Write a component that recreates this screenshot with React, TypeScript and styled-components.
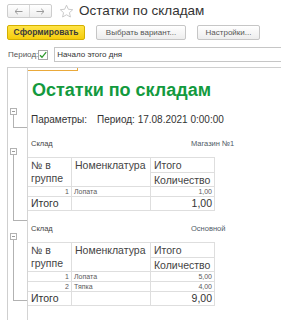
import React from 'react';
import styled, { createGlobalStyle } from 'styled-components';

const GlobalStyle = createGlobalStyle`
  html, body {
    margin: 0;
    padding: 0;
    background: #fff;
  }
  body {
    font-family: "Liberation Sans", Arial, sans-serif;
    color: #333;
    overflow: hidden;
  }
`;

const Page = styled.div`
  width: 281px;
  height: 320px;
  overflow: hidden;
  background: #fff;
`;

/* --- window header --- */

const TitleBar = styled.div`
  display: flex;
  align-items: center;
  height: 14px;
  padding: 4px 0 0 7px;
`;

const NavGroup = styled.div`
  display: flex;
  height: 14px;
  box-sizing: border-box;
  border: 1px solid #cdcdcd;
  border-radius: 2px;
  background: linear-gradient(#ffffff, #eeeeee);
`;

const NavButton = styled.div<{ $divider?: boolean }>`
  width: 21px;
  display: flex;
  align-items: center;
  justify-content: center;
  border-left: ${(p) => (p.$divider ? '1px solid #d8d8d8' : 'none')};
`;

const Star = styled.svg`
  margin-left: 7px;
  flex: none;
`;

const WindowTitle = styled.div`
  margin-left: 5px;
  font-size: 13.5px;
  line-height: 16px;
  color: #333;
  white-space: nowrap;
`;

const CommandBar = styled.div`
  display: flex;
  gap: 11px;
  padding-left: 7px;
  margin-top: 7px;
`;

const Button = styled.button<{ $primary?: boolean; $width: number }>`
  width: ${(p) => p.$width}px;
  height: 15px;
  margin: 0;
  padding: 0;
  box-sizing: border-box;
  border-radius: 2px;
  border: 1px solid ${(p) => (p.$primary ? '#d4b000' : '#c6c6c6')};
  background: ${(p) =>
    p.$primary ? 'linear-gradient(#ffe447, #f6cd0c)' : 'linear-gradient(#ffffff, #ededed)'};
  font-family: inherit;
  font-size: ${(p) => (p.$primary ? '8.5px' : '8px')};
  font-weight: ${(p) => (p.$primary ? 'bold' : 'normal')};
  color: ${(p) => (p.$primary ? '#3a3a3a' : '#555')};
  line-height: 13px;
  white-space: nowrap;
`;

const ParamRow = styled.div`
  display: flex;
  align-items: center;
  margin-top: 7px;
  padding-left: 8px;
  height: 15px;
`;

const ParamLabel = styled.span`
  font-size: 8px;
  color: #555;
  width: 33px;
`;

const CheckBox = styled.div`
  width: 10px;
  height: 10px;
  box-sizing: border-box;
  border: 1px solid #a8a8a8;
  background: #fff;
  display: flex;
  align-items: center;
  justify-content: center;
  flex: none;
`;

const Input = styled.div`
  margin-left: 6px;
  flex: none;
  width: 240px;
  height: 15px;
  box-sizing: border-box;
  border: 1px solid #c6c6c6;
  padding-left: 2px;
  font-size: 8px;
  line-height: 13px;
  color: #333;
`;

/* --- spreadsheet --- */

const Report = styled.div`
  margin: 5px 0 0 7px;
  border-top: 1px solid #cfcfcf;
  border-left: 1px solid #cfcfcf;
`;

const Band = styled.div`
  display: flex;
`;

const Gutter = styled.div`
  width: 19px;
  flex: none;
`;

const Bracket = styled.div<{ $top: number; $bottom: number }>`
  width: 19px;
  flex: none;
  box-sizing: border-box;
  padding: ${(p) => p.$top}px 0 ${(p) => p.$bottom}px 2px;
  display: flex;
  flex-direction: column;
  align-items: flex-start;
`;

const Toggle = styled.div`
  width: 7px;
  height: 7px;
  box-sizing: border-box;
  border: 1px solid #b2b2b2;
  display: flex;
  align-items: center;
  justify-content: center;
  &::after {
    content: '';
    width: 3px;
    height: 1px;
    background: #9a9a9a;
  }
`;

const Stem = styled.div`
  flex: 1;
  margin-left: 3px;
  width: 14px;
  box-sizing: border-box;
  border-left: 1px solid #b2b2b2;
  border-bottom: 1px solid #b2b2b2;
`;

const Sheet = styled.div<{ $pt?: number; $pb?: number }>`
  flex: 1;
  border-left: 1px solid #d4d4d4;
  padding: ${(p) => p.$pt ?? 0}px 0 ${(p) => p.$pb ?? 0}px;
  min-width: 0;
`;

const SelectedCell = styled.div`
  width: 50px;
  height: 3px;
  box-sizing: border-box;
  border-right: 1px solid #eaa93a;
  border-bottom: 1px solid #eaa93a;
`;

const ReportTitle = styled.div`
  padding-left: 4px;
  font-size: 18px;
  line-height: 22px;
  font-weight: bold;
  color: #139a3e;
  white-space: nowrap;
`;

const ParamsLine = styled.div`
  display: flex;
  font-size: 10px;
  line-height: 12px;
  color: #333;
  white-space: nowrap;
`;

const ParamsName = styled.span`
  width: 66px;
  padding-left: 3px;
  flex: none;
`;

const WarehouseRow = styled.div`
  display: grid;
  grid-template-columns: 163px 1fr;
  height: 14px;
  align-items: center;
  margin-bottom: 7px;
  white-space: nowrap;
`;

const SmallCaption = styled.span`
  padding-left: 3px;
  font-size: 7.5px;
  color: #444;
`;

const WarehouseName = styled.span`
  font-size: 7.5px;
  color: #4f5a66;
`;

const Table = styled.div`
  display: grid;
  grid-template-columns: 44px 79px 64px;
  width: 187px;
  border-top: 1px solid #dedede;
`;

type Kind = 'head' | 'row' | 'total';

const Cell = styled.div<{ $kind: Kind; $right?: boolean; $span?: number; $h?: number }>`
  box-sizing: border-box;
  border-right: 1px solid #dedede;
  border-bottom: 1px solid #dedede;
  grid-row: span ${(p) => p.$span ?? 1};
  height: ${(p) => (p.$h ? `${p.$h}px` : 'auto')};
  padding: ${(p) => (p.$kind === 'head' ? '1px 2px 0 3px' : p.$right ? '0 2px 0 0' : '0 0 0 2px')};
  text-align: ${(p) => (p.$right ? 'right' : 'left')};
  font-size: ${(p) => (p.$kind === 'row' ? '7px' : '10.5px')};
  line-height: ${(p) => (p.$kind === 'head' ? '13px' : p.$kind === 'row' ? '9px' : '13px')};
  color: ${(p) => (p.$kind === 'row' ? '#5a5a5a' : '#444')};
  white-space: ${(p) => (p.$kind === 'head' ? 'normal' : 'nowrap')};
`;

const TotalCell = styled(Cell)`
  padding-left: ${(p) => (p.$right ? '0' : '3px')};
  color: #333;
`;

/* --- icons --- */

const ArrowLeft = () => (
  <svg width="9" height="7" viewBox="0 0 9 7">
    <path d="M8.5 3.5H1M3.8 0.8L1 3.5l2.8 2.7" fill="none" stroke="#9a9a9a" strokeWidth="1" />
  </svg>
);

const ArrowRight = () => (
  <svg width="9" height="7" viewBox="0 0 9 7">
    <path d="M0.5 3.5H8M5.2 0.8L8 3.5 5.2 6.2" fill="none" stroke="#9a9a9a" strokeWidth="1" />
  </svg>
);

const StarIcon = () => (
  <Star width="15" height="15" viewBox="0 0 15 15">
    <path
      d="M7.5 1.2l1.85 4.05 4.4.45-3.3 2.95.95 4.35L7.5 10.75 3.6 13l.95-4.35L1.25 5.7l4.4-.45z"
      fill="none"
      stroke="#c4c4c4"
      strokeWidth="0.9"
      strokeLinejoin="round"
    />
  </Star>
);

const CheckMark = () => (
  <svg width="8" height="8" viewBox="0 0 8 8">
    <path d="M1 4.2l2 2.1L7.2 1.2" fill="none" stroke="#2f9a2f" strokeWidth="1.3" />
  </svg>
);

/* --- data --- */

type Item = { n: number; name: string; qty: string };
type Stock = { warehouse: string; items: Item[]; total: string };

const stocks: Stock[] = [
  { warehouse: 'Магазин №1', items: [{ n: 1, name: 'Лопата', qty: '1,00' }], total: '1,00' },
  {
    warehouse: 'Основной',
    items: [
      { n: 1, name: 'Лопата', qty: '5,00' },
      { n: 2, name: 'Тяпка', qty: '4,00' },
    ],
    total: '9,00',
  },
];

const StockGroup = ({ stock, tail }: { stock: Stock; tail: number }) => (
  <Band>
    <Bracket $top={12} $bottom={tail}>
      <Toggle />
      <Stem />
    </Bracket>
    <Sheet $pb={tail ? 0 : 10}>
      <WarehouseRow>
        <SmallCaption>Склад</SmallCaption>
        <WarehouseName>{stock.warehouse}</WarehouseName>
      </WarehouseRow>
      <Table>
        <Cell $kind="head" $span={2}>№ в группе</Cell>
        <Cell $kind="head" $span={2}>Номенклатура</Cell>
        <Cell $kind="head" $h={15}>Итого</Cell>
        <Cell $kind="head" $h={14}>Количество</Cell>
        {stock.items.map((it) => (
          <React.Fragment key={it.n}>
            <Cell $kind="row" $right $h={10}>{it.n}</Cell>
            <Cell $kind="row" $h={10}>{it.name}</Cell>
            <Cell $kind="row" $right $h={10}>{it.qty}</Cell>
          </React.Fragment>
        ))}
        <TotalCell $kind="total" $h={14}>Итого</TotalCell>
        <TotalCell $kind="total" $h={14} />
        <TotalCell $kind="total" $right $h={14}>{stock.total}</TotalCell>
      </Table>
    </Sheet>
  </Band>
);

export default function App() {
  return (
    <Page>
      <GlobalStyle />
      <TitleBar>
        <NavGroup>
          <NavButton>
            <ArrowLeft />
          </NavButton>
          <NavButton $divider>
            <ArrowRight />
          </NavButton>
        </NavGroup>
        <StarIcon />
        <WindowTitle>Остатки по складам</WindowTitle>
      </TitleBar>

      <CommandBar>
        <Button $primary $width={78}>Сформировать</Button>
        <Button $width={90}>Выбрать вариант...</Button>
        <Button $width={63}>Настройки...</Button>
      </CommandBar>

      <ParamRow>
        <ParamLabel>Период:</ParamLabel>
        <CheckBox>
          <CheckMark />
        </CheckBox>
        <Input>Начало этого дня</Input>
      </ParamRow>

      <Report>
        <Band>
          <Gutter />
          <Sheet>
            <SelectedCell />
          </Sheet>
        </Band>
        <Band>
          <Gutter />
          <Sheet $pt={8} $pb={5}>
            <ReportTitle>Остатки по складам</ReportTitle>
          </Sheet>
        </Band>
        <Band>
          <Bracket $top={2} $bottom={0}>
            <Toggle />
            <Stem />
          </Bracket>
          <Sheet $pt={8} $pb={2}>
            <ParamsLine>
              <ParamsName>Параметры:</ParamsName>
              <span>Период: 17.08.2021 0:00:00</span>
            </ParamsLine>
          </Sheet>
        </Band>
        <Band>
          <Gutter />
          <Sheet $pt={8} />
        </Band>
        <StockGroup stock={stocks[0]} tail={0} />
        <StockGroup stock={stocks[1]} tail={5} />
        <Band>
          <Gutter />
          <Sheet $pt={20} />
        </Band>
      </Report>
    </Page>
  );
}
